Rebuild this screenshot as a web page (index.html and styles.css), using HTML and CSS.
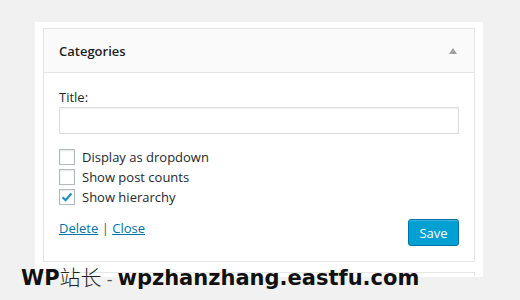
FILE: index.html
```html
<!DOCTYPE html>
<html>
<head>
<meta charset="utf-8">
<link rel="stylesheet" href="styles.css">
</head>
<body>
<div class="panel">
  <div class="widget">
    <div class="widget-head">
      <span class="widget-title">Categories</span>
      <span class="arrow"></span>
    </div>
    <div class="widget-body">
      <label class="field-label">Title:</label>
      <div class="input"></div>
      <div class="checks">
        <div class="check-row"><span class="box"></span><span>Display as dropdown</span></div>
        <div class="check-row"><span class="box"></span><span>Show post counts</span></div>
        <div class="check-row"><span class="box checked"><svg viewBox="0 0 16 16" width="16" height="16"><path d="M3.6 8.2 L6.6 11.2 L12.4 4.6" fill="none" stroke="#1e8cbe" stroke-width="2.2"/></svg></span><span>Show hierarchy</span></div>
      </div>
      <div class="actions">
        <div class="links"><a class="link">Delete</a> <span class="sep">|</span> <a class="link">Close</a></div>
        <button class="save">Save</button>
      </div>
    </div>
  </div>
  <div class="widget next"></div>
</div>
<div class="watermark"><b>WP</b><span class="cjk">站长</span><span class="dash"> - </span><b>wpzhanzhang.eastfu.com</b></div>
</body>
</html>
```
FILE: styles.css
```css
html, body {
  margin: 0;
  padding: 0;
}
body {
  background: #f1f1f1;
  width: 520px;
  height: 300px;
  position: relative;
  overflow: hidden;
  font-family: "Open Sans", "Liberation Sans", sans-serif;
  font-size: 13px;
  color: #23282d;
}
.panel {
  margin: 22px 0 0 35px;
  width: 448px;
  height: 255px;
  background: #fff;
  padding: 6px 8px 0 8px;
  box-sizing: border-box;
  overflow: hidden;
}
.widget {
  border: 1px solid #e5e5e5;
  background: #fff;
}
.widget-head {
  height: 43px;
  background: #fafafa;
  border-bottom: 1px solid #e5e5e5;
  display: flex;
  align-items: center;
  justify-content: space-between;
  padding: 0 17px 0 15px;
}
.widget-title {
  font-weight: 600;
  font-size: 13px;
  color: #1e1e1e;
}
.arrow {
  width: 0;
  height: 0;
  border-left: 4px solid transparent;
  border-right: 4px solid transparent;
  border-bottom: 6px solid #a0a0a0;
}
.widget-body {
  padding: 15px 15px 15px 15px;
}
.field-label {
  display: block;
  line-height: 18px;
}
.input {
  margin-top: 1px;
  height: 25px;
  border: 1px solid #dddddd;
  box-shadow: inset 0 1px 2px rgba(0,0,0,0.07);
  background: #fff;
}
.checks {
  margin-top: 13px;
  display: flex;
  flex-direction: column;
}
.check-row {
  display: flex;
  align-items: center;
  gap: 7px;
  height: 20px;
  line-height: 20px;
}
.box {
  width: 14px;
  height: 14px;
  border: 1px solid #b4b9be;
  background: #fff;
  box-shadow: inset 0 1px 2px rgba(0,0,0,0.1);
  position: relative;
  flex: none;
}
.box svg {
  position: absolute;
  left: -1px;
  top: -1px;
}
.actions {
  margin-top: 11px;
  display: flex;
  justify-content: space-between;
  align-items: flex-start;
}
.links {
  line-height: 20px;
}
.link {
  color: #0073aa;
  text-decoration: underline;
}
.sep {
  color: #555;
}
.save {
  margin-top: 1px;
  width: 51px;
  height: 27px;
  background: #00a0d2;
  border: 1px solid #0073aa;
  border-radius: 3px;
  color: #fff;
  font-family: "Open Sans", "Liberation Sans", sans-serif;
  font-size: 13px;
  padding: 0;
  box-shadow: inset 0 1px 0 rgba(120,200,230,0.5);
}
.widget.next {
  margin-top: 10px;
  height: 40px;
}
.watermark {
  position: absolute;
  left: 21px;
  top: 262px;
  font-family: "DejaVu Sans", "Noto Sans CJK SC", sans-serif;
  font-size: 21px;
  line-height: 28px;
  color: #111;
  white-space: nowrap;
}
.watermark b {
  font-weight: bold;
}
.cjk {
  font-family: "Noto Sans CJK SC", sans-serif;
  font-weight: 300;
  color: #222;
}
.dash {
  font-weight: normal;
  font-size: 16px;
  color: #555;
}
```
